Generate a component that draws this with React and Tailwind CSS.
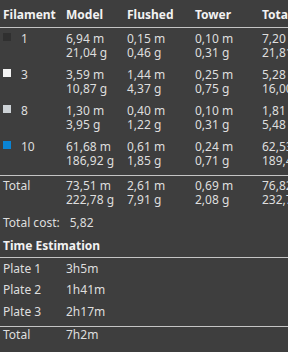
import React from 'react';

const rows = [
  { id: '1', color: 'bg-[#303030]', model: ['6,94 m', '21,04 g'], flushed: ['0,15 m', '0,46 g'], tower: ['0,10 m', '0,31 g'], total: ['7,20 m', '21,81 g'] },
  { id: '3', color: 'bg-[#f4f4f4]', model: ['3,59 m', '10,87 g'], flushed: ['1,44 m', '4,37 g'], tower: ['0,25 m', '0,75 g'], total: ['5,28 m', '16,00 g'] },
  { id: '8', color: 'bg-[#cdd2d6]', model: ['1,30 m', '3,95 g'], flushed: ['0,40 m', '1,22 g'], tower: ['0,10 m', '0,31 g'], total: ['1,81 m', '5,48 g'] },
  { id: '10', color: 'bg-[#0a84d4]', model: ['61,68 m', '186,92 g'], flushed: ['0,61 m', '1,85 g'], tower: ['0,24 m', '0,71 g'], total: ['62,53 m', '189,48 g'] },
];

const plates = [
  { name: 'Plate 1', time: '3h5m' },
  { name: 'Plate 2', time: '1h41m' },
  { name: 'Plate 3', time: '2h17m' },
];

const cols = 'grid grid-cols-[63px_61px_68px_67px_70px] pl-[3px]';

function Pair({ v }) {
  return (
    <div className="whitespace-nowrap">
      <div>{v[0]}</div>
      <div>{v[1]}</div>
    </div>
  );
}

export default function App() {
  return (
    <div className="w-[288px] h-[352px] overflow-hidden bg-[#3e3e3e] text-[#dedede] text-[12px] font-['Noto_Sans',sans-serif]">
      {/* Header */}
      <div className={`${cols} w-[330px] pt-[7px] pb-[4px] leading-4 font-bold text-[#f2f2f2] border-b border-[#c4c4c4]`}>
        <div>Filament</div>
        <div>Model</div>
        <div>Flushed</div>
        <div>Tower</div>
        <div>Total</div>
      </div>

      {/* Filament rows */}
      <div className="flex flex-col gap-[9px] pt-[4px] pb-[8px] leading-[13.5px] border-b border-[#c4c4c4]">
        {rows.map((r) => (
          <div key={r.id} className={`${cols} w-[330px]`}>
            <div className="flex items-start gap-[10px]">
              <span className={`mt-[1px] w-[8px] h-[8px] ${r.color}`} />
              <span>{r.id}</span>
            </div>
            <Pair v={r.model} />
            <Pair v={r.flushed} />
            <Pair v={r.tower} />
            <Pair v={r.total} />
          </div>
        ))}
      </div>

      {/* Totals */}
      <div className="pt-[3px] leading-[13.5px]">
        <div className={`${cols} w-[330px]`}>
          <div>Total</div>
          <Pair v={['73,51 m', '222,78 g']} />
          <Pair v={['2,61 m', '7,91 g']} />
          <Pair v={['0,69 m', '2,08 g']} />
          <Pair v={['76,82 m', '232,77 g']} />
        </div>
        <div className="pl-[3px] pt-[10px] flex">
          <span>Total cost:</span>
          <span className="ml-[10px]">5,82</span>
        </div>
        <div className="pl-[3px] pt-[9.5px] pb-[4.5px] font-bold text-[#f2f2f2] border-b border-[#c4c4c4]">
          Time Estimation
        </div>
      </div>

      {/* Plates */}
      <div className="flex flex-col gap-[8px] pt-[3.5px] pb-[8px] leading-[13.5px] border-b border-[#c4c4c4]">
        {plates.map((p) => (
          <div key={p.name} className="grid grid-cols-[63px_1fr] pl-[3px]">
            <div>{p.name}</div>
            <div>{p.time}</div>
          </div>
        ))}
      </div>
      <div className="grid grid-cols-[63px_1fr] pl-[3px] pt-[1px] leading-[13.5px]">
        <div>Total</div>
        <div>7h2m</div>
      </div>
    </div>
  );
}
